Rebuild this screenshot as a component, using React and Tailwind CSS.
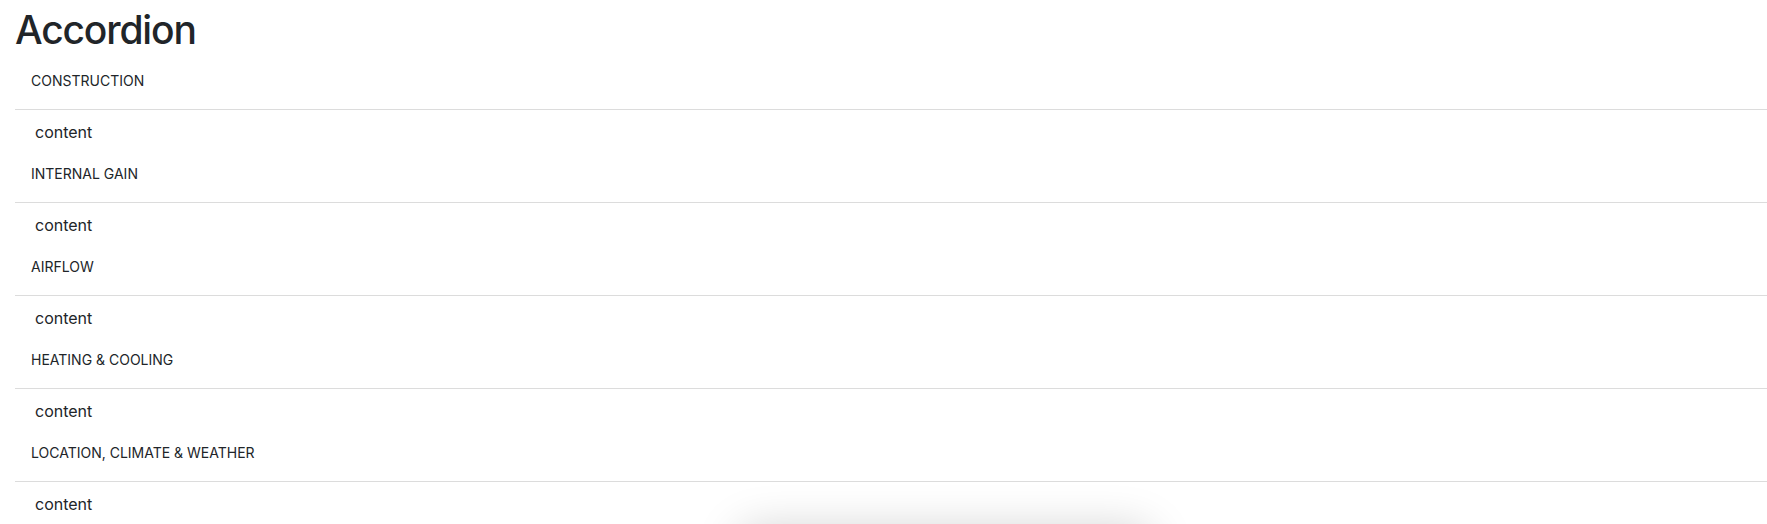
import { useState } from 'react';

/* 아코디언 섹션 목록 */
const SECTIONS = [
    'CONSTRUCTION',
    'INTERNAL GAIN',
    'AIRFLOW',
    'HEATING & COOLING',
    'LOCATION, CLIMATE & WEATHER',
];

/* 아코디언 한 줄 */
const AccordionItem = ({ title, open, onToggle }) => (
    <div>
        <button
            type="button"
            onClick={onToggle}
            className="block w-full text-left pl-4 pt-[17px] pb-[18px] text-sm leading-[20px] text-[#212529] border-b border-[#dcdcdc] cursor-pointer"
        >
            {title}
        </button>
        {open && (
            <div className="pl-5 pt-[10px] pb-[3px] text-base leading-6 text-[#212529] h-[37px]">
                content
            </div>
        )}
    </div>
);

const App = () => {
    /* 열린 섹션 상태 */
    const [openItems, setOpenItems] = useState(SECTIONS.map(() => true));

    const toggle = (i) =>
        setOpenItems(prev => prev.map((v, idx) => (idx === i ? !v : v)));

    return (
        <div className="min-h-screen bg-white pl-[15px] pt-[6px] font-['Inter','Liberation_Sans',sans-serif] overflow-hidden">
            <h1 className="text-[39px] leading-[48px] font-medium tracking-[-0.03em] text-[#212529]">Accordion</h1>
            <div className="flex flex-col">
                {SECTIONS.map((title, i) => (
                    <AccordionItem key={title} title={title} open={openItems[i]} onToggle={() => toggle(i)} />
                ))}
            </div>

            {/* 하단 토스트 (화면 밖) */}
            <div className="fixed left-[750px] top-[540px] w-[390px] h-[60px] rounded-lg bg-white shadow-[0_0_45px_12px_rgba(0,0,0,0.18)]" />
        </div>
    );
};

export default App;
